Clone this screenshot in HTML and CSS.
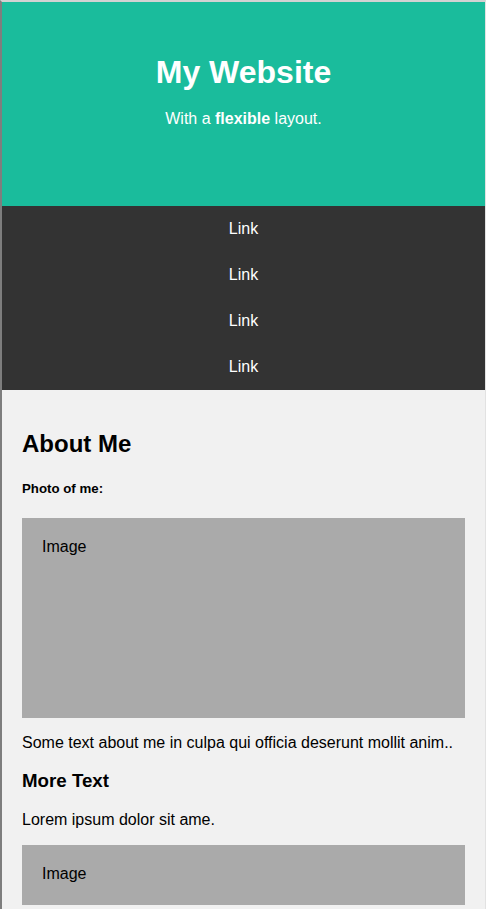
FILE: index.html
```
<!DOCTYPE html>
<html lang="en">
<head>
<meta charset="utf-8">
<title>My Website</title>
<link rel="stylesheet" href="styles.css">
</head>
<body>
<div class="frame">
  <div class="header">
    <h1>My Website</h1>
    <p>With a <b>flexible</b> layout.</p>
  </div>
  <nav class="navbar">
    <a href="#">Link</a>
    <a href="#">Link</a>
    <a href="#">Link</a>
    <a href="#">Link</a>
  </nav>
  <main class="main">
    <h2>About Me</h2>
    <h5>Photo of me:</h5>
    <div class="fakeimg">Image</div>
    <p>Some text about me in culpa qui officia deserunt mollit anim..</p>
    <h3>More Text</h3>
    <p>Lorem ipsum dolor sit ame.</p>
    <div class="fakeimg fakeimg-short">Image</div>
  </main>
</div>
</body>
</html>
```
FILE: styles.css
```
* {
  box-sizing: border-box;
}
html, body {
  margin: 0;
  overflow: hidden;
}
body {
  font-family: "Liberation Sans", Arial, sans-serif;
  background: #f1f1f1;
}
.frame {
  border-top: 2px solid #d2d2d2;
  border-left: 2px solid #7e7e7e;
  border-right: 1px solid #e2e2e2;
}
.header {
  padding: 31px 20px 62px;
  text-align: center;
  background: #1abc9c;
  color: #fff;
}
.header h1 {
  font-size: 32px;
  margin: 21.44px 0 19px;
}
.header p {
  font-size: 16px;
  margin: 16px 0;
}
.navbar {
  display: flex;
  flex-direction: column;
  background: #333;
}
.navbar a {
  color: #fff;
  text-decoration: none;
  text-align: center;
  padding: 14px 20px;
  font-size: 16px;
  line-height: 18px;
}
.main {
  background: #f1f1f1;
  padding: 20px;
  color: #000;
}
.main h2 {
  font-size: 24px;
  margin: 19.92px 0;
}
.main h5 {
  font-size: 13.28px;
  margin: 22.18px 0;
}
.main h3 {
  font-size: 18.72px;
  margin: 18.72px 0;
}
.main p {
  font-size: 16px;
  margin: 16px 0;
}
.fakeimg {
  background: #aaa;
  width: 100%;
  padding: 20px;
  height: 200px;
  font-size: 16px;
}
.fakeimg-short {
  height: 60px;
}
```
